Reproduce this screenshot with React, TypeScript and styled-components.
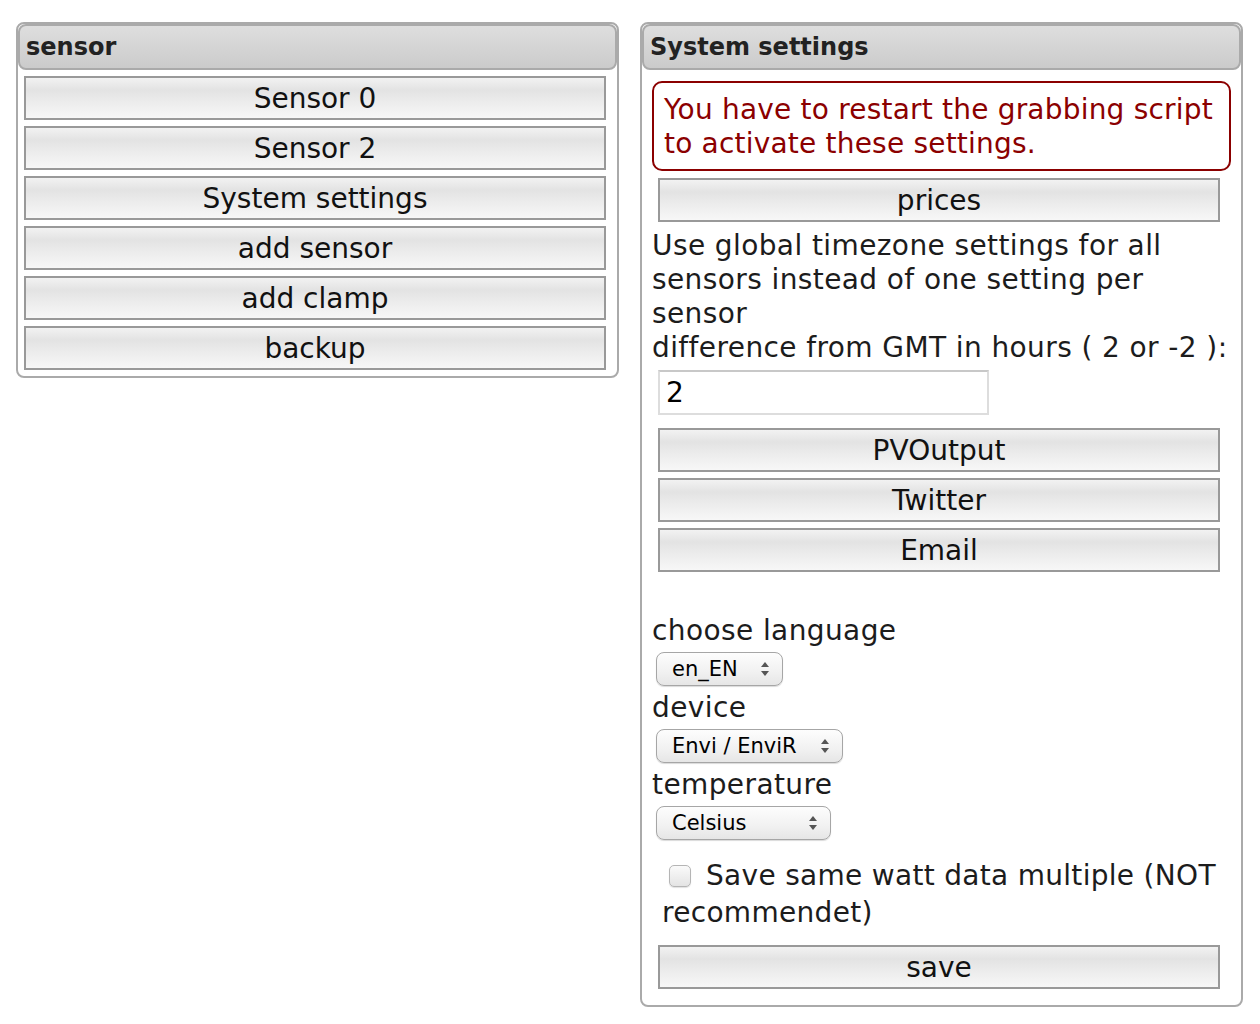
import React from "react";
import styled, { createGlobalStyle } from "styled-components";

const GlobalStyle = createGlobalStyle`
  body {
    margin: 0;
    background: #fff;
    font-family: "DejaVu Sans", Verdana, sans-serif;
    color: #222;
  }
`;

const Page = styled.div`
  display: flex;
  align-items: flex-start;
  gap: 21px;
  padding: 22px 0 0 16px;
`;

const Panel = styled.div<{ $width: number }>`
  width: ${(p) => p.$width}px;
  box-sizing: border-box;
  border: 2px solid #aaa;
  border-radius: 8px;
  background: #fff;
`;

const Header = styled.div`
  height: 46px;
  box-sizing: border-box;
  border: 2px solid #aaa;
  border-radius: 8px;
  padding: 0 6px;
  display: flex;
  align-items: center;
  background: linear-gradient(#dedede, #cbcbcb);
  font-weight: bold;
  font-size: 24px;
  color: #222;
`;

const Body = styled.div<{ $pad: string }>`
  padding: ${(p) => p.$pad};
  display: flex;
  flex-direction: column;
`;

const Button = styled.button<{ $gap?: number }>`
  height: 44px;
  margin: 0 11px ${(p) => p.$gap ?? 6}px 6px;
  border: 2px solid #999;
  border-radius: 0;
  background: linear-gradient(#f2f2f2 0%, #e3e3e3 30%, #ececec 60%, #f7f7f7 100%);
  font-family: "DejaVu Sans", Verdana, sans-serif;
  font-size: 28px;
  color: #111;
  padding: 0;
  cursor: pointer;
`;

const Alert = styled.div`
  border: 2px solid #8b0000;
  border-radius: 10px;
  padding: 10px 4px 8px 10px;
  color: #8b0000;
  font-size: 28px;
  letter-spacing: 0.2px;
  line-height: 34px;
  margin: 11px 0 7px;
`;

const Text = styled.div`
  font-size: 28px;
  letter-spacing: 0.4px;
  line-height: 34px;
  color: #1c1c1c;
`;

const Input = styled.input`
  width: 331px;
  height: 45px;
  box-sizing: border-box;
  margin: 5px 0 13px 6px;
  border: 2px solid #ddd;
  border-top-color: #c8c8c8;
  padding: 0 6px;
  font-family: "DejaVu Sans", Verdana, sans-serif;
  font-size: 28px;
  color: #000;
  outline: none;
`;

const Label = styled.div<{ $top?: number }>`
  font-size: 28px;
  letter-spacing: 0.4px;
  line-height: 34px;
  color: #1c1c1c;
  margin-top: ${(p) => p.$top ?? 0}px;
`;

const SelectBox = styled.div<{ $width: number }>`
  width: ${(p) => p.$width}px;
  height: 34px;
  box-sizing: border-box;
  margin: 4px 0 5px 4px;
  border: 1px solid #a6a6a6;
  border-radius: 8px;
  background: linear-gradient(#fdfdfd, #f1f1f1 60%, #e6e6e6);
  box-shadow: 0 1px 1px rgba(0, 0, 0, 0.15);
  display: flex;
  align-items: center;
  justify-content: space-between;
  padding: 0 12px 0 15px;
  font-size: 21px;
  color: #000;
`;

const Arrows = styled.svg`
  width: 10px;
  height: 16px;
`;

const CheckRow = styled.label`
  display: block;
  font-size: 28px;
  letter-spacing: 0.3px;
  line-height: 37px;
  color: #1c1c1c;
  padding-left: 10px;
  margin: 12px 0 14px;
`;

const Check = styled.input`
  appearance: none;
  width: 22px;
  height: 22px;
  margin: 0 15px 0 7px;
  vertical-align: -2px;
  border: 1px solid #b5b5b5;
  border-radius: 5px;
  background: linear-gradient(#fafafa, #e4e4e4);
  box-shadow: 0 1px 1px rgba(0, 0, 0, 0.12);
`;

function Select({ value, width }: { value: string; width: number }) {
  return (
    <SelectBox $width={width}>
      <span>{value}</span>
      <Arrows viewBox="0 0 10 16">
        <path d="M5 1 L9 6 H1 Z" fill="#555" />
        <path d="M5 15 L9 10 H1 Z" fill="#555" />
      </Arrows>
    </SelectBox>
  );
}

const sensorItems = ["Sensor 0", "Sensor 2", "System settings", "add sensor", "add clamp", "backup"];

export default function App() {
  return (
    <>
      <GlobalStyle />
      <Page>
        <Panel $width={603}>
          <Header>sensor</Header>
          <Body $pad="6px 0 0">
            {sensorItems.map((s) => (
              <Button key={s}>{s}</Button>
            ))}
          </Body>
        </Panel>
        <Panel $width={603}>
          <Header>System settings</Header>
          <Body $pad="0 10px 16px">
            <Alert>
              You have to restart the grabbing script to activate these settings.
            </Alert>
            <Button $gap={7}>prices</Button>
            <Text>
              Use global timezone settings for all sensors instead of one setting per sensor
              <br />
              difference from GMT in hours ( 2 or -2 ):
            </Text>
            <Input defaultValue="2" />
            <Button>PVOutput</Button>
            <Button>Twitter</Button>
            <Button>Email</Button>
            <Label $top={36}>choose language</Label>
            <Select value="en_EN" width={127} />
            <Label>device</Label>
            <Select value="Envi / EnviR" width={187} />
            <Label>temperature</Label>
            <Select value="Celsius" width={175} />
            <CheckRow>
              <Check type="checkbox" />
              Save same watt data multiple (NOT recommendet)
            </CheckRow>
            <Button $gap={0}>save</Button>
          </Body>
        </Panel>
      </Page>
    </>
  );
}
